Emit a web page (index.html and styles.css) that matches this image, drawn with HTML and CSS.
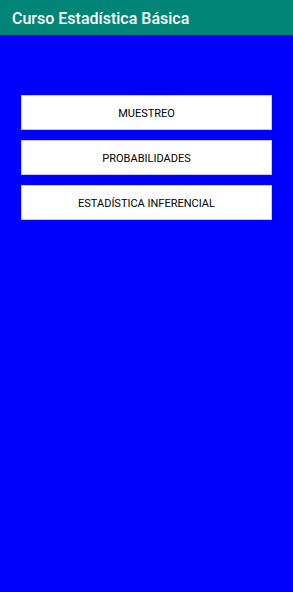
FILE: index.html
```html
<!DOCTYPE html>
<html lang="es">
<head>
<meta charset="utf-8">
<link rel="stylesheet" href="styles.css">
</head>
<body>
<header class="appbar">Curso Estadística Básica</header>
<main class="content">
  <button class="btn">MUESTREO</button>
  <button class="btn">PROBABILIDADES</button>
  <button class="btn">ESTADÍSTICA INFERENCIAL</button>
</main>
</body>
</html>
```
FILE: styles.css
```css
html, body {
  margin: 0;
  padding: 0;
  height: 100%;
}
body {
  background: #0000ff;
  font-family: Roboto, "Noto Sans", sans-serif;
  display: flex;
  flex-direction: column;
}
.appbar {
  background: #008577;
  color: #ffffff;
  height: 35px;
  box-sizing: border-box;
  padding: 1px 12px 0 12px;
  display: flex;
  align-items: center;
  font-size: 16px;
  font-weight: 500;
}
.content {
  display: flex;
  flex-direction: column;
  gap: 10px;
  padding: 60px 21px 0 21px;
}
.btn {
  height: 35px;
  background: #ffffff;
  border: 1px solid #c8c8f0;
  margin: 0;
  font-family: Roboto, "Noto Sans", sans-serif;
  font-size: 11px;
  color: #000000;
  padding: 2px 0 0 0;
}
```
